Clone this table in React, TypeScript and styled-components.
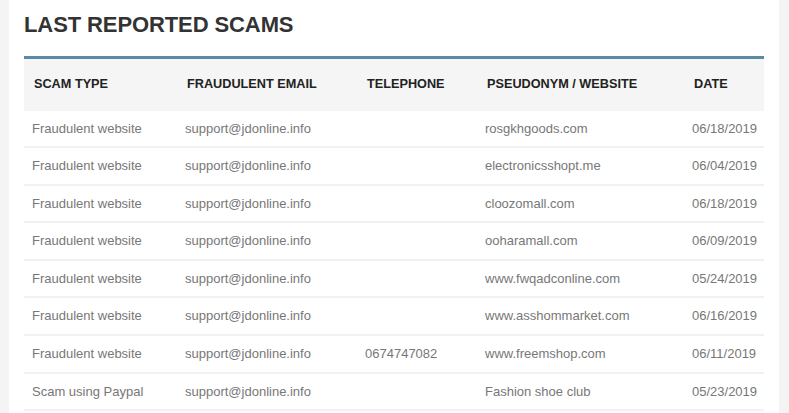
import React from "react";
import styled, { createGlobalStyle } from "styled-components";

interface Scam {
  type: string;
  email: string;
  phone?: string;
  site: string;
  date: string;
}

const scams: Scam[] = [
  { type: "Fraudulent website", email: "support@jdonline.info", site: "rosgkhgoods.com", date: "06/18/2019" },
  { type: "Fraudulent website", email: "support@jdonline.info", site: "electronicsshopt.me", date: "06/04/2019" },
  { type: "Fraudulent website", email: "support@jdonline.info", site: "cloozomall.com", date: "06/18/2019" },
  { type: "Fraudulent website", email: "support@jdonline.info", site: "ooharamall.com", date: "06/09/2019" },
  { type: "Fraudulent website", email: "support@jdonline.info", site: "www.fwqadconline.com", date: "05/24/2019" },
  { type: "Fraudulent website", email: "support@jdonline.info", site: "www.asshommarket.com", date: "06/16/2019" },
  { type: "Fraudulent website", email: "support@jdonline.info", phone: "0674747082", site: "www.freemshop.com", date: "06/11/2019" },
  { type: "Scam using Paypal", email: "support@jdonline.info", site: "Fashion shoe club", date: "05/23/2019" },
];

const columns = [
  { label: "SCAM TYPE", width: 153 },
  { label: "FRAUDULENT EMAIL", width: 180 },
  { label: "TELEPHONE", width: 120 },
  { label: "PSEUDONYM / WEBSITE", width: 207 },
  { label: "DATE", width: 80 },
];

const App: React.FC = () => {
  return (
    <>
      <GlobalStyle />
      <Page>
        <Card>
          <Title>LAST REPORTED SCAMS</Title>
          <Table>
            <colgroup>
              {columns.map((col) => (
                <col key={col.label} style={{ width: col.width }} />
              ))}
            </colgroup>
            <thead>
              <tr>
                {columns.map((col) => (
                  <HeadCell key={col.label}>{col.label}</HeadCell>
                ))}
              </tr>
            </thead>
            <tbody>
              {scams.map((scam, i) => (
                <Row key={i}>
                  <Cell>{scam.type}</Cell>
                  <Cell>{scam.email}</Cell>
                  <Cell>{scam.phone || ""}</Cell>
                  <Cell>{scam.site}</Cell>
                  <Cell>{scam.date}</Cell>
                </Row>
              ))}
            </tbody>
          </Table>
        </Card>
      </Page>
    </>
  );
};

const GlobalStyle = createGlobalStyle`
  html, body {
    margin: 0;
    padding: 0;
    background: #f4f4f4;
    font-family: "Liberation Sans", Arial, sans-serif;
  }
`;

const Page = styled.div`
  padding-left: 9px;
  height: 413px;
  overflow: hidden;
`;

const Card = styled.div`
  width: 770px;
  min-height: 413px;
  background: #fff;
  padding: 12px 15px 0;
  box-sizing: border-box;
`;

const Title = styled.h2`
  margin: 0 0 19px;
  font-size: 22px;
  line-height: 25px;
  font-weight: 700;
  letter-spacing: -0.1px;
  color: #333;
`;

const Table = styled.table`
  width: 740px;
  table-layout: fixed;
  border-collapse: collapse;
  border-top: 3px solid #5b8aa8;
`;

const HeadCell = styled.th`
  background: #f5f5f5;
  height: 53px;
  padding: 0 0 1px 10px;
  text-align: left;
  font-size: 12.7px;
  font-weight: 700;
  color: #222;
  box-sizing: border-box;
`;

const Row = styled.tr`
  border-bottom: 2px solid #f1f1f1;
`;

const Cell = styled.td`
  padding: 9px 0 9px 8px;
  line-height: 17.6px;
  font-size: 13px;
  color: #777;
  white-space: nowrap;
`;

export default App;
